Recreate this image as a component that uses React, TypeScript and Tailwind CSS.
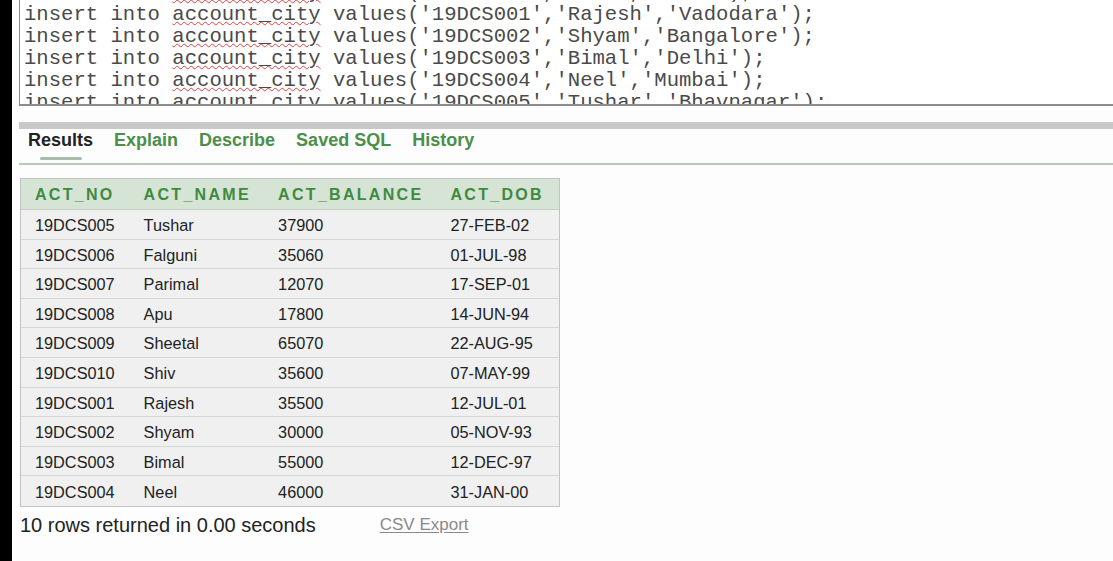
import React from "react";

const rows = [
  ["19DCS005", "Tushar", "37900", "27-FEB-02"],
  ["19DCS006", "Falguni", "35060", "01-JUL-98"],
  ["19DCS007", "Parimal", "12070", "17-SEP-01"],
  ["19DCS008", "Apu", "17800", "14-JUN-94"],
  ["19DCS009", "Sheetal", "65070", "22-AUG-95"],
  ["19DCS010", "Shiv", "35600", "07-MAY-99"],
  ["19DCS001", "Rajesh", "35500", "12-JUL-01"],
  ["19DCS002", "Shyam", "30000", "05-NOV-93"],
  ["19DCS003", "Bimal", "55000", "12-DEC-97"],
  ["19DCS004", "Neel", "46000", "31-JAN-00"],
];

const code: [string, string][] = [
  ["19DCS010", "'Shiv','Surat');"],
  ["19DCS001", "'Rajesh','Vadodara');"],
  ["19DCS002", "'Shyam','Bangalore');"],
  ["19DCS003", "'Bimal','Delhi');"],
  ["19DCS004", "'Neel','Mumbai');"],
  ["19DCS005", "'Tushar','Bhavnagar');"],
];

function CodeLine({ id, rest }: { id: string; rest: string }) {
  return (
    <div className="h-[22px] leading-[22px] whitespace-pre">
      {"insert into "}
      <span className="underline decoration-wavy decoration-[#e04040] decoration-1 underline-offset-[1px]">
        account_city
      </span>
      {` values('${id}',${rest}`}
    </div>
  );
}

export default function App() {
  const cols = ["w-[109px]", "w-[135px]", "w-[173px]", "w-[123px]"];
  return (
    <div className="flex w-[1113px] h-[561px] bg-[#fdfdfd] overflow-hidden font-['Liberation_Sans',Arial,sans-serif]">
      <div className="w-[12px] shrink-0 bg-black" />
      <div className="flex-1 pl-[7px] flex flex-col">
        <div className="h-[106px] shrink-0 border-l border-b-2 border-[#8c8c8c] overflow-hidden pl-[4px] bg-white">
          <div className="mt-[-18px] font-['Liberation_Mono',monospace] text-[20.6px] text-[#4a4a4a]">
            {code.map(([id, rest], i) => (
              <CodeLine key={i} id={id} rest={rest} />
            ))}
          </div>
        </div>
        <div className="mt-[16px] h-[7px] bg-[#c9c9c9]" />
        <div className="flex gap-[21px] pl-[9px] text-[18px] font-bold leading-[22px] h-[22px]">
          <span className="text-[#222]">Results</span>
          <span className="text-[#4a8f4a]">Explain</span>
          <span className="text-[#4a8f4a]">Describe</span>
          <span className="text-[#4a8f4a]">Saved SQL</span>
          <span className="text-[#4a8f4a]">History</span>
        </div>
        <div className="mt-[6px] ml-[21px] w-[42px] h-[3px] rounded-full bg-[#a9bca9]" />
        <div className="mt-[3px] h-[2px] bg-[#b7cbb7]" />
        <div className="mt-[13px] ml-[1px] w-[540px] border border-[#c2c2c2]">
          <div className="flex h-[31px] pt-[1px] items-center bg-[#d5e4d5] border-b border-[#c4cfc4] text-[16px] font-bold tracking-[2.3px] text-[#3f8a3f]">
            {["ACT_NO", "ACT_NAME", "ACT_BALANCE", "ACT_DOB"].map((h, i) => (
              <div key={h} className={`${cols[i]} pl-[14px]`}>{h}</div>
            ))}
          </div>
          {rows.map((r, ri) => (
            <div
              key={ri}
              className={`flex h-[29.6px] pt-[2px] items-center bg-[#f0f0f0] text-[16.3px] text-[#222] ${ri < rows.length - 1 ? "border-b border-[#d6d6d6]" : ""}`}
            >
              {r.map((c, i) => (
                <div key={i} className={`${cols[i]} pl-[14px]`}>{c}</div>
              ))}
            </div>
          ))}
        </div>
        <div className="mt-[7px] ml-[1px] flex items-center h-[22px]">
          <span className="text-[20px] text-[#222]">10 rows returned in 0.00 seconds</span>
          <span className="ml-[64px] text-[17px] text-[#8a8a8a] underline underline-offset-2">CSV Export</span>
        </div>
      </div>
    </div>
  );
}
